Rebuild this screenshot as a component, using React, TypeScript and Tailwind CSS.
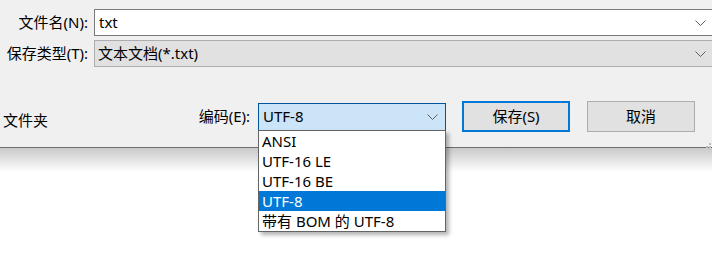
const font = { fontFamily: '"Noto Sans", "Noto Sans CJK SC", sans-serif' };

const Chevron = () => (
  <svg width="11" height="6" viewBox="0 0 11 6" className="shrink-0">
    <path d="M0.5 0.5 L5.5 5.5 L10.5 0.5" fill="none" stroke="#5f5f5f" strokeWidth="1" />
  </svg>
);

const encodings = ["ANSI", "UTF-16 LE", "UTF-16 BE", "UTF-8", "带有 BOM 的 UTF-8"];

export default function App() {
  return (
    <div
      className="relative w-[712px] h-[253px] overflow-hidden bg-white text-[15px] text-black leading-none"
      style={font}
    >
      <div className="h-[148px] bg-[#f0f0f0] border-b border-[#6e6e6e] flex flex-col">
        <div className="mt-[9px] flex items-center">
          <div className="w-[88px] text-right">文件名(N):</div>
          <div className="ml-[6px] -mr-[6px] flex-1 h-[27px] bg-white border border-[#7a7a7a] flex items-center pl-[4px] pr-[11px]">
            <span className="flex-1">txt</span>
            <Chevron />
          </div>
        </div>
        <div className="mt-[4px] flex items-center">
          <div className="w-[88px] text-right">保存类型(T):</div>
          <div className="ml-[6px] -mr-[6px] flex-1 h-[27px] bg-[#e1e1e1] border border-[#adadad] flex items-center pl-[3px] pr-[11px]">
            <span className="flex-1">文本文档(*.txt)</span>
            <Chevron />
          </div>
        </div>
        <div className="mt-[34px] flex items-center h-[31px]">
          <div className="w-[198px] pl-[3px] mt-[8px] whitespace-nowrap">文件夹</div>
          <div className="w-[52px] text-right">编码(E):</div>
          <div className="ml-[8px] w-[188px] h-[28px] bg-[#cce4f7] border border-[#005499] flex items-center pl-[4px] pr-[7px]">
            <span className="flex-1">UTF-8</span>
            <Chevron />
          </div>
          <div className="ml-[16px] w-[108px] h-[31px] bg-[#e1e1e1] border-2 border-[#0078d7] flex items-center justify-center">
            保存(S)
          </div>
          <div className="ml-[17px] w-[108px] h-[31px] bg-[#e1e1e1] border border-[#adadad] flex items-center justify-center">
            取消
          </div>
          <div className="ml-auto self-end mb-[-16px] mr-[1px] grid grid-cols-3 gap-[1px]">
            <span className="w-[2px] h-[2px]" />
            <span className="w-[2px] h-[2px]" />
            <span className="w-[2px] h-[2px] bg-[#bdbdbd]" />
            <span className="w-[2px] h-[2px]" />
            <span className="w-[2px] h-[2px] bg-[#bdbdbd]" />
            <span className="w-[2px] h-[2px] bg-[#bdbdbd]" />
          </div>
        </div>
      </div>
      <div className="h-[24px] bg-gradient-to-b from-[#c9c9c9] to-white" />

      <div className="absolute left-[258px] top-[130px] w-[188px] border border-[#646464] bg-white shadow-[3px_3px_4px_rgba(0,0,0,0.3)]">
        {encodings.map((e) => (
          <div
            key={e}
            className={
              "h-[20px] pl-[3px] flex items-center " +
              (e === "UTF-8" ? "bg-[#0078d7] text-white" : "")
            }
          >
            {e}
          </div>
        ))}
      </div>
    </div>
  );
}
